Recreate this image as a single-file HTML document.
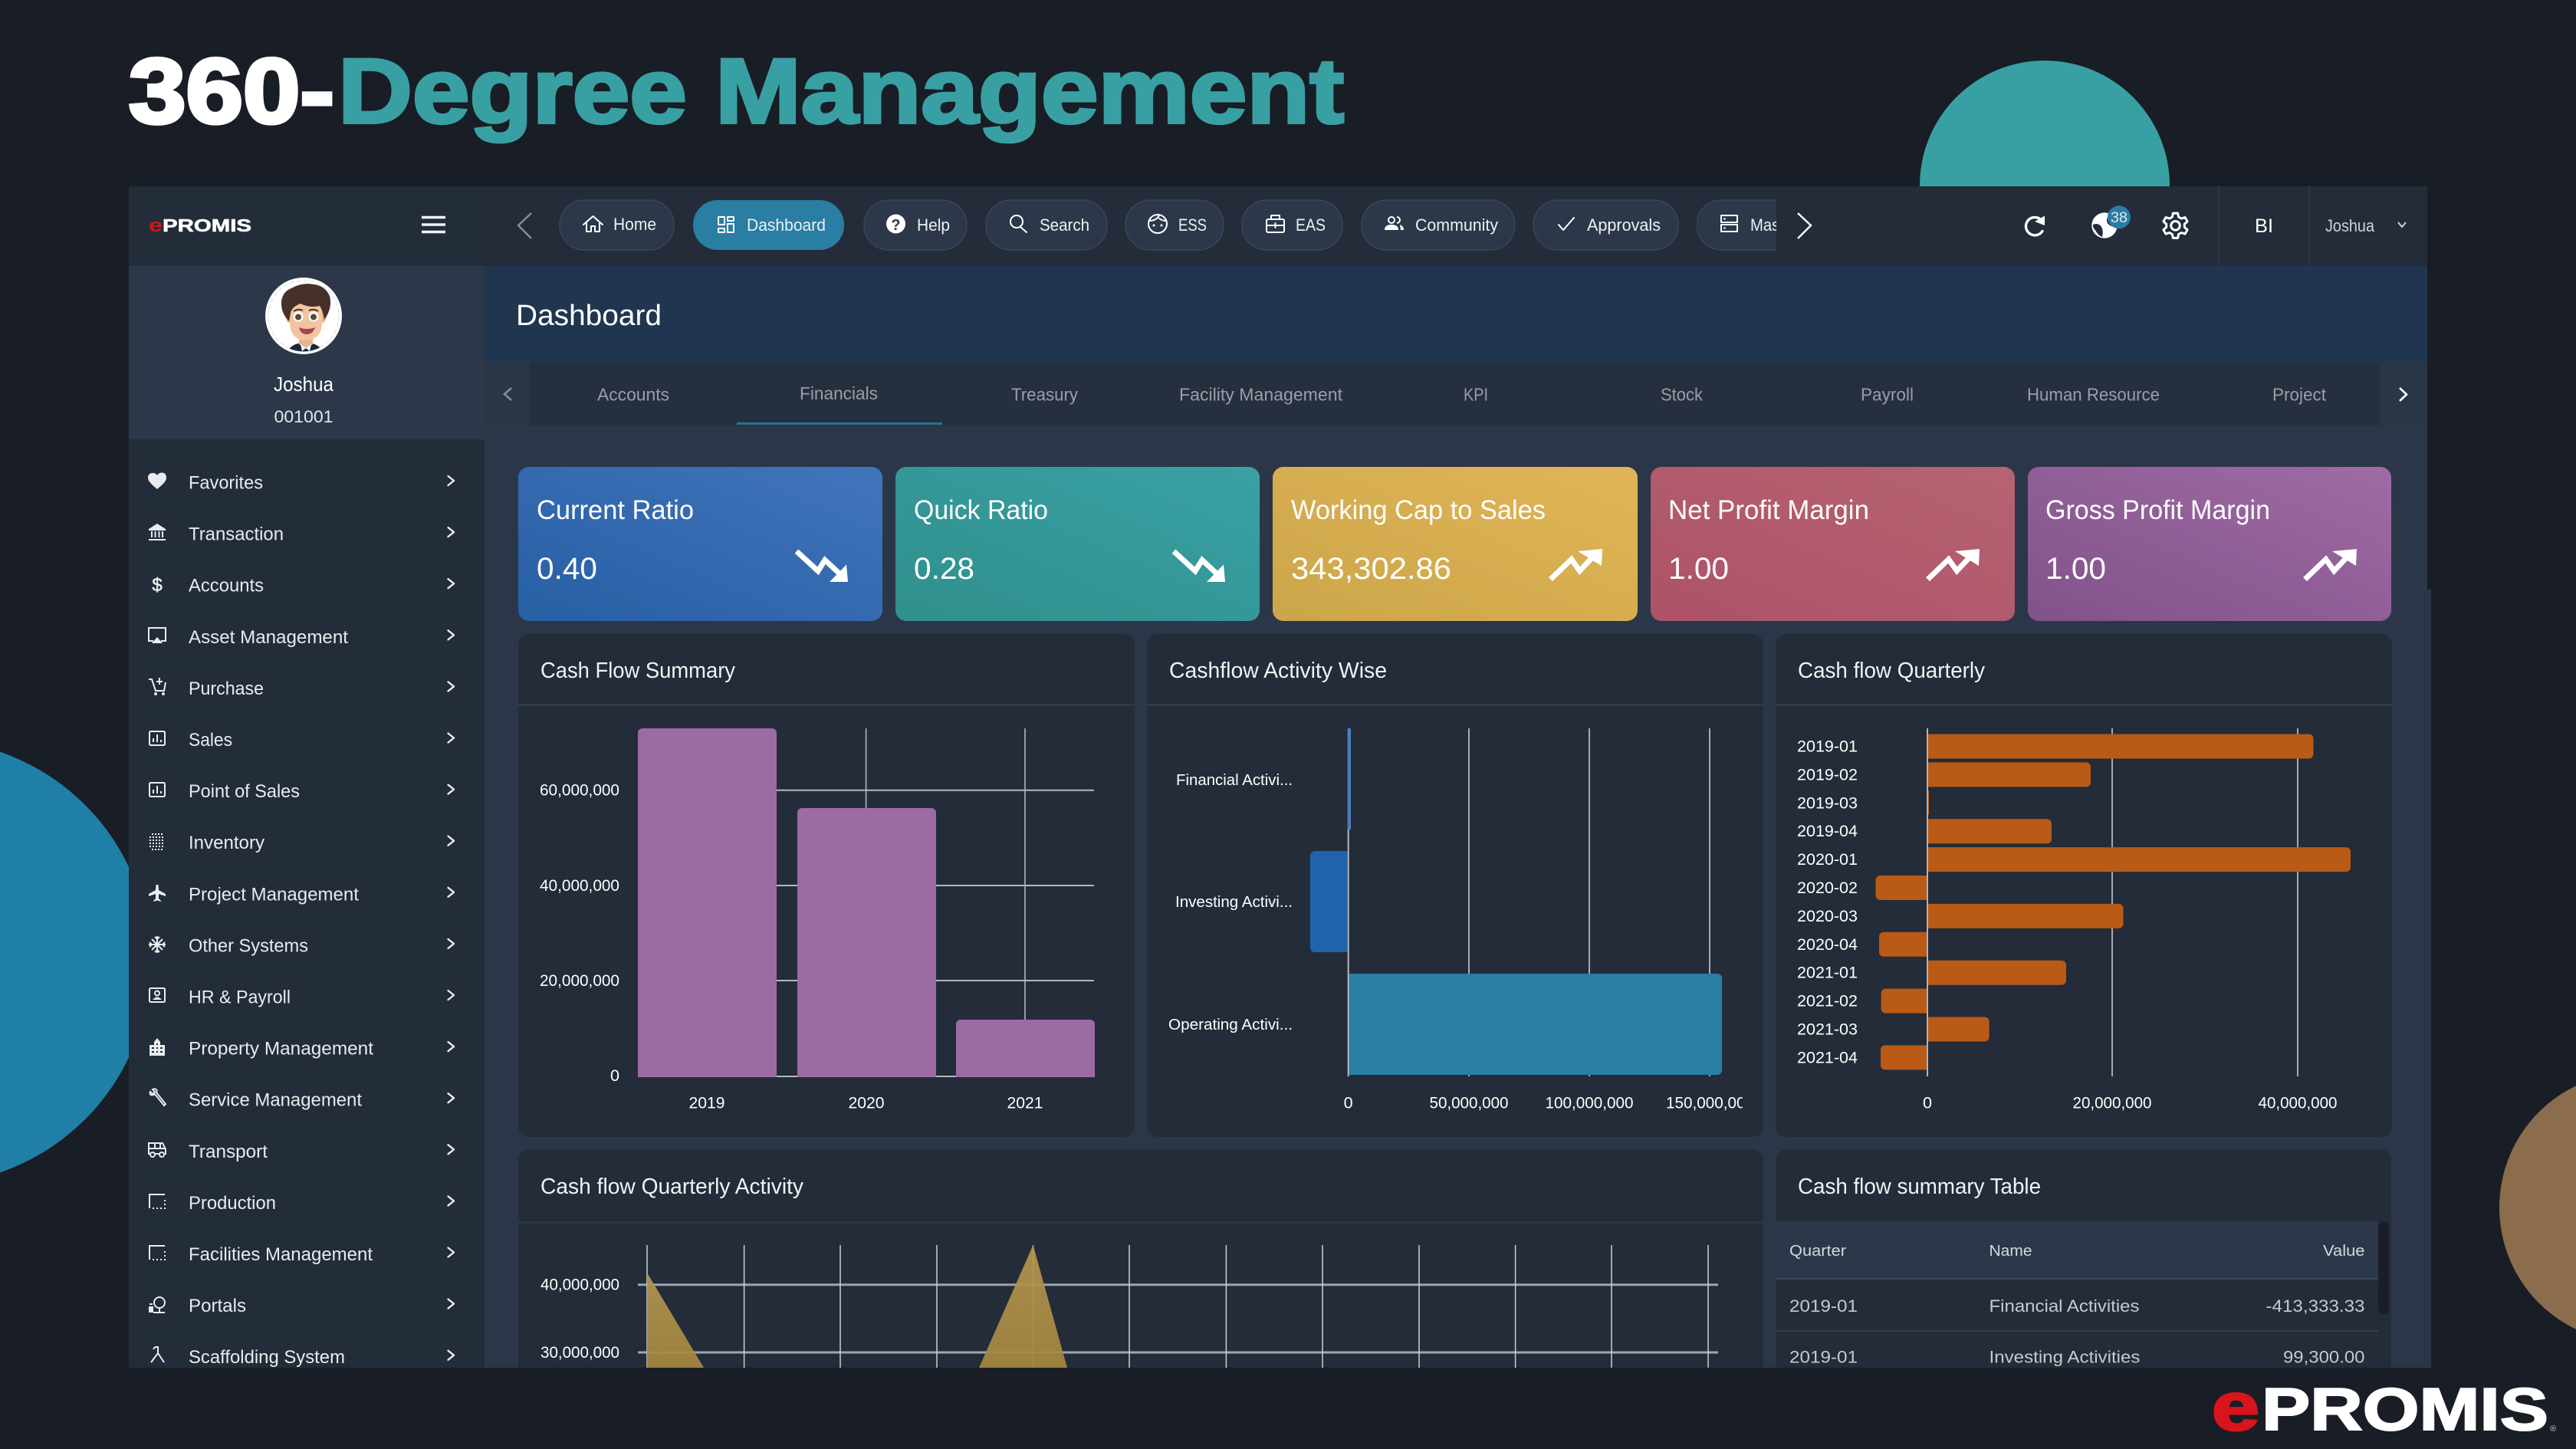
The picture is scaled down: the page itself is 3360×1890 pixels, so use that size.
<!DOCTYPE html>
<html lang="en"><head><meta charset="utf-8"><title>360-Degree Management</title>
<style>
html,body{margin:0;padding:0;background:#191d25;width:3360px;height:1890px;overflow:hidden}
svg{display:block;position:absolute;left:0;top:0}
text{font-family:"Liberation Sans",sans-serif;fill:#fff}
.m{font-size:24.5px;fill:#e9ebee}
.p{font-size:22px;fill:#eef0f2}
.t{font-size:23px;fill:#989fa9}
.c1{font-size:35px}.c2{font-size:40px}
.h{font-size:28.5px;fill:#f1f2f4}
.a{font-size:21px;fill:#e6e8eb}
.th{font-size:20.5px;fill:#d5d8dd}.td{font-size:22.5px;fill:#c6cad0}
.ic{fill:none;stroke:#fff;stroke-width:2;stroke-linecap:round;stroke-linejoin:round}
.si{fill:none;stroke:#e9ebee;stroke-width:2}
.sf{fill:#e9ebee}
.chev{fill:none;stroke:#e9ebee;stroke-width:2.4;stroke-linecap:round;stroke-linejoin:round}
</style></head><body>
<svg width="3360" height="1890" viewBox="0 0 3360 1890" xmlns="http://www.w3.org/2000/svg">
<defs>
<clipPath id="app"><rect x="168" y="243" width="3003" height="1541"/></clipPath>
<clipPath id="mas"><rect x="2213" y="255" width="104" height="76"/></clipPath>
<clipPath id="ax"><rect x="2100" y="1420" width="172.6" height="40"/></clipPath>
<clipPath id="av"><circle cx="396" cy="411.500" r="47"/></clipPath>
<linearGradient id="g1" x1="0" y1="1" x2="1" y2="0"><stop offset="0" stop-color="#275fa3"/><stop offset="1" stop-color="#4174bc"/></linearGradient>
<linearGradient id="g2" x1="0" y1="1" x2="1" y2="0"><stop offset="0" stop-color="#2f8f8c"/><stop offset="1" stop-color="#3aa1a4"/></linearGradient>
<linearGradient id="g3" x1="0" y1="1" x2="1" y2="0"><stop offset="0" stop-color="#cba649"/><stop offset="1" stop-color="#e1b557"/></linearGradient>
<linearGradient id="g4" x1="0" y1="1" x2="1" y2="0"><stop offset="0" stop-color="#ad5268"/><stop offset="1" stop-color="#b66372"/></linearGradient>
<linearGradient id="g5" x1="0" y1="1" x2="1" y2="0"><stop offset="0" stop-color="#81528a"/><stop offset="1" stop-color="#a06ba5"/></linearGradient>
<linearGradient id="ga" x1="0" y1="0" x2="0" y2="1"><stop offset="0" stop-color="#b59650"/><stop offset="1" stop-color="#a4863f"/></linearGradient>
<g id="up"><path d="M3.5 39.6L30.7 13.5L41.4 28.6L60.7 8.2" fill="none" stroke="#fff" stroke-width="7"/><path d="M39 3L71 0L70 22Z" fill="#fff"/></g>
<g id="down"><path d="M3 1.6L31 27.3L40 13L62 33.5" fill="none" stroke="#fff" stroke-width="7"/><path d="M46 41.500L70 41.500L68 19Z" fill="#fff"/></g>
<path id="ch" class="chev" d="M-3.5 -6L4 0L-3.5 6"/>
<g id="dotsq"><path d="M-10 9V-9H10" class="si"/><path d="M-6 9H10V-5" class="si" stroke-dasharray="2 3"/></g>
</defs>

<rect width="3360" height="1890" fill="#191d25"/>
<circle cx="-94" cy="1255" r="290" fill="#1f7fa7"/>
<circle cx="2667" cy="242" r="163" fill="#38a0a3"/>
<circle cx="3436" cy="1575" r="176" fill="#8b6c4c"/>

<text x="168" y="160" font-size="120" font-weight="700" stroke="#fff" stroke-width="5" textLength="268" lengthAdjust="spacingAndGlyphs">360-</text>
<text x="441" y="160" font-size="120" font-weight="700" style="fill:#38a0a3" stroke="#38a0a3" stroke-width="4" textLength="1312" lengthAdjust="spacingAndGlyphs">Degree Management</text>

<g clip-path="url(#app)">
<rect x="632" y="243" width="2534" height="1541" fill="#2b3748"/>
<rect x="632" y="769" width="2539" height="1015" fill="#2b3748"/>
<rect x="168" y="243" width="464" height="1541" fill="#232c39"/>
<rect x="168" y="347" width="464" height="226" fill="#2c3849"/>
<rect x="632" y="243" width="2534" height="104" fill="#232c38"/>
<rect x="632" y="347" width="2534" height="126" fill="#203650"/>
<rect x="632" y="473" width="2534" height="82" fill="#262f3d"/>
<rect x="632" y="473" width="59" height="82" fill="#2a3545"/>
<rect x="3104" y="473" width="62" height="82" fill="#2a3545"/>

<text x="194" y="302" font-size="24" font-weight="700" style="fill:#d0151d" textLength="18" lengthAdjust="spacingAndGlyphs">e</text>
<text x="212" y="302" font-size="23" font-weight="700" stroke="#fff" stroke-width=".6" textLength="116" lengthAdjust="spacingAndGlyphs">PROMIS</text>
<path d="M550 283.5H581M550 293H581M550 302.5H581" stroke="#f0f1f3" stroke-width="3.4"/>

<!-- avatar -->
<circle cx="396" cy="412" r="50" fill="#fff"/>
<circle cx="396" cy="412" r="46" fill="none" stroke="#d9dbde" stroke-width="1" stroke-dasharray="6 3"/>
<g clip-path="url(#av)">
<path d="M374 462Q378 447 398 447Q418 447 422 462Z" fill="#1d2a36"/>
<path d="M390 434H408V449L399 455L390 449Z" fill="#e8b48d"/>
<path d="M399 454L392 449L394 458ZM399 454L406 449L404 458Z" fill="#fff"/>
<ellipse cx="377" cy="414" rx="4" ry="7" fill="#eab78f"/><ellipse cx="421" cy="414" rx="4" ry="7" fill="#eab78f"/>
<path d="M378 400Q398 388 420 400V420Q420 443 399 444Q378 443 378 420Z" fill="#f2c4a0"/>
<path d="M377 419Q366 408 367 393Q369 380 380 376Q394 368 410 371Q424 373 430 386Q434 402 423 417Q421 405 417 399Q404 402 392 396Q381 400 379 408Z" fill="#46302a"/>
<circle cx="389" cy="413" r="6.500" fill="#fff"/><circle cx="409" cy="413" r="6.500" fill="#fff"/>
<circle cx="389" cy="413.500" r="4" fill="#5a463a"/><circle cx="409" cy="413.500" r="4" fill="#5a463a"/>
<path d="M383 406Q389 402 395 405M403 405Q409 402 415 406" fill="none" stroke="#4a3028" stroke-width="2"/>
<path d="M390 427Q400 431 411 427Q408 436 400 436Q392 436 390 427Z" fill="#a64452"/>
</g>
<text x="396" y="510" text-anchor="middle" font-size="26" textLength="78" lengthAdjust="spacingAndGlyphs">Joshua</text>
<text x="396" y="551" text-anchor="middle" font-size="22" style="fill:#e4e6ea" textLength="77" lengthAdjust="spacingAndGlyphs">001001</text>

<!-- menu text -->
<text class="m" x="246" y="637.5" textLength="97" lengthAdjust="spacingAndGlyphs">Favorites</text>
<text class="m" x="246" y="704.6" textLength="124" lengthAdjust="spacingAndGlyphs">Transaction</text>
<text class="m" x="246" y="771.7" textLength="98" lengthAdjust="spacingAndGlyphs">Accounts</text>
<text class="m" x="246" y="838.8" textLength="208" lengthAdjust="spacingAndGlyphs">Asset Management</text>
<text class="m" x="246" y="905.9" textLength="98" lengthAdjust="spacingAndGlyphs">Purchase</text>
<text class="m" x="246" y="973" textLength="57" lengthAdjust="spacingAndGlyphs">Sales</text>
<text class="m" x="246" y="1040.1" textLength="145" lengthAdjust="spacingAndGlyphs">Point of Sales</text>
<text class="m" x="246" y="1107.2" textLength="99" lengthAdjust="spacingAndGlyphs">Inventory</text>
<text class="m" x="246" y="1174.3" textLength="222" lengthAdjust="spacingAndGlyphs">Project Management</text>
<text class="m" x="246" y="1241.4" textLength="156" lengthAdjust="spacingAndGlyphs">Other Systems</text>
<text class="m" x="246" y="1308.5" textLength="133" lengthAdjust="spacingAndGlyphs">HR &amp; Payroll</text>
<text class="m" x="246" y="1375.6" textLength="241" lengthAdjust="spacingAndGlyphs">Property Management</text>
<text class="m" x="246" y="1442.7" textLength="226" lengthAdjust="spacingAndGlyphs">Service Management</text>
<text class="m" x="246" y="1509.8" textLength="103" lengthAdjust="spacingAndGlyphs">Transport</text>
<text class="m" x="246" y="1576.9" textLength="114" lengthAdjust="spacingAndGlyphs">Production</text>
<text class="m" x="246" y="1644" textLength="240" lengthAdjust="spacingAndGlyphs">Facilities Management</text>
<text class="m" x="246" y="1711.1" textLength="75" lengthAdjust="spacingAndGlyphs">Portals</text>
<text class="m" x="246" y="1778.2" textLength="204" lengthAdjust="spacingAndGlyphs">Scaffolding System</text>

<use href="#ch" x="588" y="627"/><use href="#ch" x="588" y="694.1"/><use href="#ch" x="588" y="761.2"/><use href="#ch" x="588" y="828.3"/><use href="#ch" x="588" y="895.4"/><use href="#ch" x="588" y="962.5"/><use href="#ch" x="588" y="1029.6"/><use href="#ch" x="588" y="1096.7"/><use href="#ch" x="588" y="1163.8"/><use href="#ch" x="588" y="1230.9"/><use href="#ch" x="588" y="1298"/><use href="#ch" x="588" y="1365.1"/><use href="#ch" x="588" y="1432.2"/><use href="#ch" x="588" y="1499.3"/><use href="#ch" x="588" y="1566.4"/><use href="#ch" x="588" y="1633.5"/><use href="#ch" x="588" y="1700.6"/><use href="#ch" x="588" y="1767.7"/>

<!-- menu icons -->
<path class="sf" d="M205 638C198 632 193 628 193 623C193 616 202 615 205 620C208 615 217 615 217 623C217 628 212 632 205 638Z"/>
<g transform="translate(205,694)"><path class="sf" d="M-11 -4L0 -11L11 -4V-2H-11Z"/><path class="si" d="M-7 -1V7M-2.500 -1V7M2.500 -1V7M7 -1V7"/><path class="si" d="M-11 10H11"/></g>
<text x="205" y="771" text-anchor="middle" font-size="24" style="fill:#e9ebee" stroke="#e9ebee" stroke-width=".6">$</text>
<g transform="translate(205,828)"><path class="si" d="M-5 8H-11V-9H11V8H5" stroke-width="2.500"/><path class="sf" d="M-7 11L0 3L7 11Z"/></g>
<g transform="translate(205,895)"><path class="si" d="M-11 -9H-7L-2 6H9L11 -5"/><path class="si" d="M3 -11V-2M-1 -6H7"/><circle class="sf" cx="-2" cy="10" r="2"/><circle class="sf" cx="8" cy="10" r="2"/></g>
<g transform="translate(205,963)"><rect class="si" x="-10" y="-9" width="20" height="18" rx="1.5" stroke-width="2.500"/><path class="si" d="M-5 5V0M0 5V-5M5 5V2"/></g>
<g transform="translate(205,1030)"><rect class="si" x="-10" y="-9" width="20" height="18" rx="1.5" stroke-width="2.500"/><path class="si" d="M-5 5V0M0 5V-5M5 5V2"/></g>
<g transform="translate(205,1098)"><path d="M-7 -10H7M-10 -6H10M-10 -2H10M-10 2H10M-10 6H10M-7 10H7" stroke="#f2f3f5" stroke-width="2" stroke-dasharray="2 2" fill="none"/></g>
<g transform="translate(205,1165)"><path class="sf" d="M-1.500 -11H1.500L2 -4L11 1V4L2 1L2 7L5 10V11L0 9.500L-5 11V10L-2 7L-2 1L-11 4V1L-2 -4Z"/></g>
<g transform="translate(205,1232)"><path class="si" stroke-width="2.500" d="M0 -11V11M-11 0H11M-7 -7L7 7M7 -7L-7 7M-3 -10L0 -7L3 -10M-3 10L0 7L3 10M-10 -3L-7 0L-10 3M10 -3L7 0L10 3"/></g>
<g transform="translate(205,1298)"><rect class="si" x="-10" y="-9" width="20" height="18" rx="1.500" stroke-width="2.500"/><circle class="si" cx="0" cy="-2.500" r="3"/><path class="sf" d="M-6 6Q0 -1 6 6Z"/></g>
<g transform="translate(205,1366)"><path class="sf" d="M-10 11V-3H-4V-7L0 -12L4 -7V-3H10V11Z"/><path d="M-7 1H-4M-1 1H1M4 1H7M-7 6H-4M-1 6H1M4 6H7M-1 -4H1" stroke="#232c39" stroke-width="2"/></g>
<g transform="translate(205,1432)"><path class="si" d="M-3 -5L9 10L11 8L-1 -7C1 -10 -2 -13 -6 -11L-3 -8L-6 -5L-9 -8C-11 -4 -7 -2 -3 -5Z" stroke-width="2"/></g>
<g transform="translate(205,1500)"><path class="si" d="M-11 -1V-9H7L11 -1V5H-11ZM-11 -2H11M-3 -9V-2M4 -9V-2"/><circle cx="-6" cy="6" r="3" fill="#232c39" stroke="#e9ebee" stroke-width="2"/><circle cx="6" cy="6" r="3" fill="#232c39" stroke="#e9ebee" stroke-width="2"/></g>
<use href="#dotsq" x="205" y="1567"/>
<use href="#dotsq" x="205" y="1634"/>
<g transform="translate(205,1702)"><circle class="si" cx="3" cy="-3" r="7"/><path class="si" d="M-5 10H10M3 4V10"/><path class="sf" d="M-11 2H-5V10H-11ZM-10 -2H-6V0H-10Z"/></g>
<g transform="translate(205,1768)"><path class="si" stroke-width="2.200" d="M-3 -11L1 -11L1 -3L-8 9M1 -3L9 9M-3 -11L-5 -8"/></g>

<!-- top bar -->
<path d="M693 278L676 294L693 311" fill="none" stroke="#858e99" stroke-width="2.4"/>
<path d="M2345 278L2362 294L2345 311" fill="none" stroke="#fff" stroke-width="2.4"/>
<g fill="#2c3849" stroke="#3a4656" stroke-width="1.5">
<rect x="730" y="261" width="149" height="65" rx="32"/>
<rect x="1127" y="261" width="134" height="65" rx="32"/>
<rect x="1286" y="261" width="158" height="65" rx="32"/>
<rect x="1468" y="261" width="128" height="65" rx="32"/>
<rect x="1620" y="261" width="131" height="65" rx="32"/>
<rect x="1776" y="261" width="200" height="65" rx="32"/>
<rect x="2000" y="261" width="189" height="65" rx="32"/>
<rect x="2213" y="261" width="140" height="65" rx="32" clip-path="url(#mas)"/>
</g>
<rect x="904" y="261" width="197" height="65" rx="32" fill="#2a7da3"/>
<text class="p" x="800" y="300" textLength="56" lengthAdjust="spacingAndGlyphs">Home</text>
<text class="p" x="974" y="301" textLength="103" lengthAdjust="spacingAndGlyphs">Dashboard</text>
<text class="p" x="1196" y="301" textLength="43" lengthAdjust="spacingAndGlyphs">Help</text>
<text class="p" x="1356" y="301" textLength="65" lengthAdjust="spacingAndGlyphs">Search</text>
<text class="p" x="1537" y="301" textLength="37" lengthAdjust="spacingAndGlyphs">ESS</text>
<text class="p" x="1690" y="301" textLength="39" lengthAdjust="spacingAndGlyphs">EAS</text>
<text class="p" x="1846" y="301" textLength="108" lengthAdjust="spacingAndGlyphs">Community</text>
<text class="p" x="2070" y="301" textLength="96" lengthAdjust="spacingAndGlyphs">Approvals</text>
<g clip-path="url(#mas)"><text class="p" x="2283" y="301" textLength="62" lengthAdjust="spacingAndGlyphs">Master</text></g>

<path class="ic" d="M761 293L773.5 282L786 293M765 290V302H771V295H776V302H782V290"/>
<g class="ic"><rect x="937" y="283" width="8" height="10"/><rect x="949" y="283" width="8" height="5"/><rect x="937" y="298" width="8" height="5"/><rect x="949" y="292" width="8" height="11"/></g>
<circle cx="1168.5" cy="292" r="12.5" fill="#fff"/><text x="1168.5" y="300" text-anchor="middle" font-size="20" font-weight="700" style="fill:#2c3849">?</text>
<g class="ic"><circle cx="1326" cy="289" r="8"/><path d="M1331 296L1339 303"/></g>
<g class="ic"><circle cx="1510" cy="292" r="12"/><path d="M1499 288Q1508 288 1512 281M1512 285Q1516 288 1521 288"/></g><circle cx="1505" cy="294" r="1.5" fill="#fff"/><circle cx="1515" cy="294" r="1.5" fill="#fff"/>
<g class="ic"><rect x="1652" y="286" width="23" height="17" rx="2"/><path d="M1658 286V281H1669V286M1652 294H1675M1663.5 291V297"/></g>
<g fill="#fff"><circle cx="1815" cy="287" r="4" fill="none" stroke="#fff" stroke-width="2"/><path d="M1806 300Q1806 293 1815 293Q1824 293 1824 300Z"/><path d="M1822 283A4 4 0 0 1 1822 291" fill="none" stroke="#fff" stroke-width="2"/><path d="M1826 293Q1831 295 1831 300H1827Z"/></g>
<path class="ic" d="M2033 293L2039 300L2053 284"/>
<g class="ic"><rect x="2245" y="281" width="21" height="9"/><rect x="2245" y="293" width="21" height="9"/><path d="M2249 285.5H2250M2249 297.5H2250"/></g>
<!-- refresh -->
<path d="M2664 301.5A11.7 11.7 0 1 1 2660 285" fill="none" stroke="#fff" stroke-width="3.4" stroke-linecap="round"/>
<path d="M2654 289L2667 281.500L2667 294Z" fill="#fff"/>
<!-- globe -->
<circle cx="2745" cy="294" r="16.700" fill="#fff"/>
<path d="M2730 293Q2737 290 2741 296Q2744 301 2742 309L2738 307Q2733 301 2730 296ZM2749 283Q2746 290 2752 294Q2758 297 2761 296L2758 284Z" fill="#232c38"/>
<circle cx="2764" cy="283.3" r="15" fill="#2a7da3"/><text x="2764" y="290" text-anchor="middle" font-size="19" style="fill:#dfe6ea" textLength="22" lengthAdjust="spacingAndGlyphs">38</text>
<!-- gear -->
<g transform="translate(2837.5,294.3)" fill="none" stroke="#fff" stroke-width="3" stroke-linejoin="round"><path d="M-4.1 -11.3L-3.1 -16.200H3.1L4.100 -11.3L7.700 -9.200L12.500 -10.800L15.600 -5.400L11.800 -2.100V2.100L15.600 5.400L12.500 10.800L7.700 9.200L4.100 11.300L3.100 16.200H-3.100L-4.100 11.300L-7.700 9.200L-12.500 10.800L-15.600 5.400L-11.800 2.100V-2.100L-15.600 -5.400L-12.500 -10.800L-7.700 -9.200Z"/><circle r="5.800"/></g>
<path d="M2894 243V347M3012 243V347" stroke="#333e4c" stroke-width="1.5"/>
<text x="2941" y="303" font-size="25" textLength="24" lengthAdjust="spacingAndGlyphs">BI</text>
<text x="3033" y="302" font-size="22" style="fill:#cfd3d9" textLength="64" lengthAdjust="spacingAndGlyphs">Joshua</text>
<path d="M3128 290L3133 296L3138 290" fill="none" stroke="#cfd3d9" stroke-width="2"/>

<text x="673" y="424" font-size="38" textLength="190" lengthAdjust="spacingAndGlyphs">Dashboard</text>

<!-- tabs -->
<path d="M667 506L658 514L667 522" fill="none" stroke="#858e99" stroke-width="2.6"/>
<path d="M3130 506L3139 514.5L3130 523" fill="none" stroke="#fff" stroke-width="2.6"/>
<text class="t" x="779" y="522.5" textLength="94" lengthAdjust="spacingAndGlyphs">Accounts</text>
<text class="t" x="1043" y="521" textLength="102" lengthAdjust="spacingAndGlyphs">Financials</text>
<text class="t" x="1319" y="522.5" textLength="87" lengthAdjust="spacingAndGlyphs">Treasury</text>
<text class="t" x="1538" y="522.5" textLength="213" lengthAdjust="spacingAndGlyphs">Facility Management</text>
<text class="t" x="1909" y="522.5" textLength="32" lengthAdjust="spacingAndGlyphs">KPI</text>
<text class="t" x="2166" y="522.5" textLength="55" lengthAdjust="spacingAndGlyphs">Stock</text>
<text class="t" x="2427" y="522.5" textLength="69" lengthAdjust="spacingAndGlyphs">Payroll</text>
<text class="t" x="2644" y="522.5" textLength="173" lengthAdjust="spacingAndGlyphs">Human Resource</text>
<text class="t" x="2964" y="522.5" textLength="70" lengthAdjust="spacingAndGlyphs">Project</text>
<rect x="961" y="551" width="268" height="3" fill="#2f6f97"/>

<!-- cards -->
<rect x="676" y="609" width="475" height="201" rx="14" fill="url(#g1)"/>
<rect x="1168" y="609" width="475" height="201" rx="14" fill="url(#g2)"/>
<rect x="1660" y="609" width="476" height="201" rx="14" fill="url(#g3)"/>
<rect x="2153" y="609" width="475" height="201" rx="14" fill="url(#g4)"/>
<rect x="2645" y="609" width="474" height="201" rx="14" fill="url(#g5)"/>
<text class="c1" x="700" y="677" textLength="205" lengthAdjust="spacingAndGlyphs">Current Ratio</text>
<text class="c1" x="1192" y="677" textLength="175" lengthAdjust="spacingAndGlyphs">Quick Ratio</text>
<text class="c1" x="1684" y="677" textLength="332" lengthAdjust="spacingAndGlyphs">Working Cap to Sales</text>
<text class="c1" x="2176" y="677" textLength="262" lengthAdjust="spacingAndGlyphs">Net Profit Margin</text>
<text class="c1" x="2668" y="677" textLength="293" lengthAdjust="spacingAndGlyphs">Gross Profit Margin</text>
<text class="c2" x="700" y="755" textLength="79" lengthAdjust="spacingAndGlyphs">0.40</text>
<text class="c2" x="1192" y="755" textLength="79" lengthAdjust="spacingAndGlyphs">0.28</text>
<text class="c2" x="1684" y="755" textLength="209" lengthAdjust="spacingAndGlyphs">343,302.86</text>
<text class="c2" x="2176" y="755" textLength="79" lengthAdjust="spacingAndGlyphs">1.00</text>
<text class="c2" x="2668" y="755" textLength="79" lengthAdjust="spacingAndGlyphs">1.00</text>
<use href="#down" x="1036" y="717.5"/>
<use href="#down" x="1528" y="717.5"/>
<use href="#up" x="2019" y="716"/>
<use href="#up" x="2511" y="716"/>
<use href="#up" x="3003" y="716"/>

<!-- panels row 1 -->
<g fill="#232c38">
<rect x="676" y="827" width="804" height="656" rx="14"/>
<rect x="1496" y="827" width="804" height="656" rx="14"/>
<rect x="2316" y="827" width="804" height="656" rx="14"/>
</g>
<path d="M676 919.5H1480M1496 919.5H2300M2316 919.5H3120" stroke="#39444f" stroke-width="1.5"/>
<text class="h" x="705" y="884" textLength="254" lengthAdjust="spacingAndGlyphs">Cash Flow Summary</text>
<text class="h" x="1525" y="884" textLength="284" lengthAdjust="spacingAndGlyphs">Cashflow Activity Wise</text>
<text class="h" x="2345" y="884" textLength="244" lengthAdjust="spacingAndGlyphs">Cash flow Quarterly</text>

<!-- chart 1 -->
<path d="M1013 1030.7H1427M1013 1155H1427M1013 1279H1427M832 1404H1428" stroke="#b4b9c0" stroke-width="2"/>
<path d="M1129.6 950V1404M1337 950V1404" stroke="#b4b9c0" stroke-width="1.6"/>
<g fill="#9d6ba4">
<path d="M832 1405V956a6 6 0 0 1 6 -6H1007a6 6 0 0 1 6 6V1405Z"/>
<path d="M1040 1405V1060a6 6 0 0 1 6 -6H1215a6 6 0 0 1 6 6V1405Z"/>
<path d="M1247 1405V1336a6 6 0 0 1 6 -6H1422a6 6 0 0 1 6 6V1405Z"/>
</g>
<g class="a">
<text x="704" y="1037.7" textLength="104" lengthAdjust="spacingAndGlyphs">60,000,000</text>
<text x="704" y="1162" textLength="104" lengthAdjust="spacingAndGlyphs">40,000,000</text>
<text x="704" y="1286" textLength="104" lengthAdjust="spacingAndGlyphs">20,000,000</text>
<text x="796" y="1410" textLength="12" lengthAdjust="spacingAndGlyphs">0</text>
<text x="898.5" y="1445.7" textLength="47" lengthAdjust="spacingAndGlyphs">2019</text>
<text x="1106.5" y="1445.7" textLength="47" lengthAdjust="spacingAndGlyphs">2020</text>
<text x="1313.5" y="1445.7" textLength="47" lengthAdjust="spacingAndGlyphs">2021</text>
</g>

<!-- chart 2 -->
<path d="M1758.7 950V1404M1916 950V1404M2073 950V1404M2230 950V1404" stroke="#b4b9c0" stroke-width="1.8"/>
<rect x="1758" y="950" width="4" height="132" fill="#4d7fbd"/>
<path d="M1758 1110H1715a6 6 0 0 0 -6 6V1236a6 6 0 0 0 6 6H1758Z" fill="#1f64aa"/>
<path d="M1758 1270H2240a6 6 0 0 1 6 6V1396a6 6 0 0 1 -6 6H1758Z" fill="#2a7ea5"/>
<path d="M1758.7 1082V1404" stroke="#b4b9c0" stroke-width="1.8"/>
<g class="a">
<text x="1534" y="1024" font-size="20" textLength="152" lengthAdjust="spacingAndGlyphs">Financial Activi...</text>
<text x="1533" y="1183" font-size="20" textLength="153" lengthAdjust="spacingAndGlyphs">Investing Activi...</text>
<text x="1524" y="1343" font-size="20" textLength="162" lengthAdjust="spacingAndGlyphs">Operating Activi...</text>
<text x="1752.7" y="1445.7" textLength="12" lengthAdjust="spacingAndGlyphs">0</text>
<text x="1864.5" y="1445.7" textLength="103" lengthAdjust="spacingAndGlyphs">50,000,000</text>
<text x="2015.5" y="1445.7" textLength="115" lengthAdjust="spacingAndGlyphs">100,000,000</text>
<g clip-path="url(#ax)"><text x="2173" y="1445.7" textLength="115" lengthAdjust="spacingAndGlyphs">150,000,000</text></g>
</g>

<!-- chart 3 -->
<path d="M2514 950V1404M2755 950V1404M2997 950V1404" stroke="#b4b9c0" stroke-width="1.8"/>
<g fill="#b95a16">
<path d="M2514 957.5H3011.5a6 6 0 0 1 6 6V983.5a6 6 0 0 1 -6 6H2514Z"/>
<path d="M2514 994.4H2721a6 6 0 0 1 6 6V1020.4a6 6 0 0 1 -6 6H2514Z"/>
<rect x="2513" y="1031" width="3" height="32"/>
<path d="M2514 1068.2H2670a6 6 0 0 1 6 6V1094.2a6 6 0 0 1 -6 6H2514Z"/>
<path d="M2514 1105.1H3060a6 6 0 0 1 6 6V1131.1a6 6 0 0 1 -6 6H2514Z"/>
<path d="M2514 1142H2452.5a6 6 0 0 0 -6 6V1168a6 6 0 0 0 6 6H2514Z"/>
<path d="M2514 1178.9H2763.5a6 6 0 0 1 6 6V1204.9a6 6 0 0 1 -6 6H2514Z"/>
<path d="M2514 1215.8H2457a6 6 0 0 0 -6 6V1241.8a6 6 0 0 0 6 6H2514Z"/>
<path d="M2514 1252.7H2689a6 6 0 0 1 6 6V1278.7a6 6 0 0 1 -6 6H2514Z"/>
<path d="M2514 1289.6H2459.6a6 6 0 0 0 -6 6V1315.6a6 6 0 0 0 6 6H2514Z"/>
<path d="M2514 1326.5H2588.6a6 6 0 0 1 6 6V1352.5a6 6 0 0 1 -6 6H2514Z"/>
<path d="M2514 1363.4H2459a6 6 0 0 0 -6 6V1389.4a6 6 0 0 0 6 6H2514Z"/>
</g>
<path d="M2514 950V1404" stroke="#b4b9c0" stroke-width="1.8"/>
<g class="a">
<text x="2344" y="980.5" textLength="79" lengthAdjust="spacingAndGlyphs">2019-01</text>
<text x="2344" y="1017.4" textLength="79" lengthAdjust="spacingAndGlyphs">2019-02</text>
<text x="2344" y="1054.3" textLength="79" lengthAdjust="spacingAndGlyphs">2019-03</text>
<text x="2344" y="1091.2" textLength="79" lengthAdjust="spacingAndGlyphs">2019-04</text>
<text x="2344" y="1128.1" textLength="79" lengthAdjust="spacingAndGlyphs">2020-01</text>
<text x="2344" y="1165" textLength="79" lengthAdjust="spacingAndGlyphs">2020-02</text>
<text x="2344" y="1201.9" textLength="79" lengthAdjust="spacingAndGlyphs">2020-03</text>
<text x="2344" y="1238.8" textLength="79" lengthAdjust="spacingAndGlyphs">2020-04</text>
<text x="2344" y="1275.7" textLength="79" lengthAdjust="spacingAndGlyphs">2021-01</text>
<text x="2344" y="1312.6" textLength="79" lengthAdjust="spacingAndGlyphs">2021-02</text>
<text x="2344" y="1349.5" textLength="79" lengthAdjust="spacingAndGlyphs">2021-03</text>
<text x="2344" y="1386.4" textLength="79" lengthAdjust="spacingAndGlyphs">2021-04</text>
<text x="2508" y="1445.7" textLength="12" lengthAdjust="spacingAndGlyphs">0</text>
<text x="2703.5" y="1445.7" textLength="103" lengthAdjust="spacingAndGlyphs">20,000,000</text>
<text x="2945.5" y="1445.7" textLength="103" lengthAdjust="spacingAndGlyphs">40,000,000</text>
</g>

<!-- panels row 2 -->
<rect x="676" y="1499" width="1624" height="300" rx="14" fill="#232c38"/>
<rect x="2317" y="1499" width="802" height="300" rx="14" fill="#232c38"/>
<rect x="676" y="1593" width="1624" height="3" fill="#2c3644"/>
<text class="h" x="705" y="1557" textLength="343" lengthAdjust="spacingAndGlyphs">Cash flow Quarterly Activity</text>
<text class="h" x="2345" y="1557" textLength="317" lengthAdjust="spacingAndGlyphs">Cash flow summary Table</text>

<!-- chart 4 -->
<path d="M832 1675.7H2241M832 1764H2241" stroke="#a0a5ac" stroke-width="3"/>
<path d="M844 1624V1784M970.6 1624V1784M1096 1624V1784M1222 1624V1784M1347.5 1624V1784M1473 1624V1784M1599.4 1624V1784M1725 1624V1784M1851 1624V1784M1976.6 1624V1784M2102 1624V1784M2228 1624V1784" stroke="#ccd0d5" stroke-width="1.5"/>
<path d="M844 1660L918 1784H844Z" fill="url(#ga)" fill-opacity=".93"/>
<path d="M1347.5 1624L1392 1784H1277Z" fill="url(#ga)" fill-opacity=".93"/>
<g class="a">
<text x="705" y="1682.7" textLength="103" lengthAdjust="spacingAndGlyphs">40,000,000</text>
<text x="705" y="1771" textLength="103" lengthAdjust="spacingAndGlyphs">30,000,000</text>
</g>

<!-- table -->
<rect x="2317" y="1593" width="785" height="75" fill="#2c3849"/>
<rect x="2317" y="1667" width="785" height="2" fill="#3a4656"/>
<rect x="2317" y="1735" width="785" height="2" fill="#323d4b"/>
<rect x="3102" y="1594" width="14" height="120" rx="6" fill="#191f28"/>
<text class="th" x="2334" y="1638" textLength="74" lengthAdjust="spacingAndGlyphs">Quarter</text>
<text class="th" x="2594.5" y="1638" textLength="56" lengthAdjust="spacingAndGlyphs">Name</text>
<text class="th" x="3030" y="1638" textLength="54.5" lengthAdjust="spacingAndGlyphs">Value</text>
<text class="td" x="2334" y="1711" textLength="89" lengthAdjust="spacingAndGlyphs">2019-01</text>
<text class="td" x="2594.5" y="1711" textLength="196" lengthAdjust="spacingAndGlyphs">Financial Activities</text>
<text class="td" x="2955.5" y="1711" textLength="129" lengthAdjust="spacingAndGlyphs">-413,333.33</text>
<text class="td" x="2334" y="1777.6" textLength="89" lengthAdjust="spacingAndGlyphs">2019-01</text>
<text class="td" x="2594.5" y="1777.6" textLength="197" lengthAdjust="spacingAndGlyphs">Investing Activities</text>
<text class="td" x="2978" y="1777.6" textLength="106.5" lengthAdjust="spacingAndGlyphs">99,300.00</text>
</g>

<!-- bottom logo -->
<text x="2885" y="1865" font-size="88" font-weight="700" style="fill:#d8141c" stroke="#d8141c" stroke-width="3" textLength="62" lengthAdjust="spacingAndGlyphs">e</text>
<text x="2950" y="1865" font-size="78" font-weight="700" stroke="#fff" stroke-width="2" textLength="374" lengthAdjust="spacingAndGlyphs">PROMIS</text>
<text x="3326" y="1867" font-size="11" style="fill:#c8ccd0">®</text>
</svg>
</body></html>
